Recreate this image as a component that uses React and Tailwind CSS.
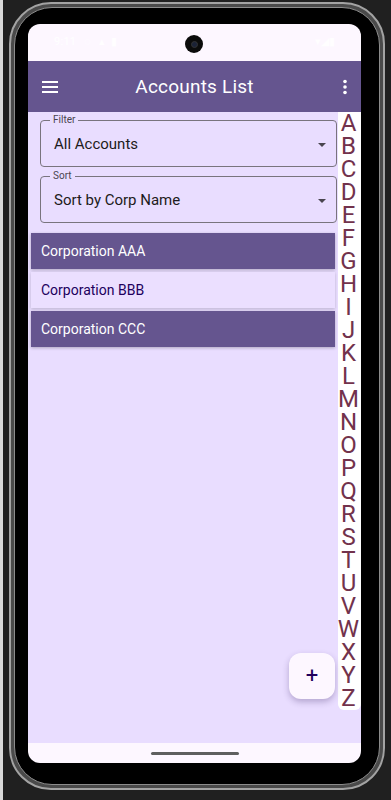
import React from 'react';

const letters = 'ABCDEFGHIJKLMNOPQRSTUVWXYZ'.split('');

const accounts = [
    { name: 'Corporation AAA', dark: true },
    { name: 'Corporation BBB', dark: false },
    { name: 'Corporation CCC', dark: true },
];

const Caret = () => (
    <svg width="8" height="4" viewBox="0 0 8 4" className="shrink-0">
        <path d="M0 0 L8 0 L4 4 Z" fill="#49454f" />
    </svg>
);

const OutlinedSelect = ({ label, value }) => (
    <div className="relative h-[47px] rounded-[4px] border border-[#79747e] flex items-center pl-[13px] pr-[10px] pt-[2px]">
        <span className="absolute -top-[7px] left-[9px] px-[3px] bg-[#e9ddff] text-[10px] leading-[12px] text-[#49454f]">{label}</span>
        <span className="flex-1 text-[15px] text-[#1d1b20]">{value}</span>
        <Caret />
    </div>
);

const App = () => {
    return (
        <div className="w-[391px] h-[800px] bg-[#202020] pl-[6px] pt-[2px] border-l-[3px] border-[#d9d9d9] overflow-hidden" style={{ fontFamily: 'Roboto, "Noto Sans", sans-serif' }}>
            <div className="w-[376px] h-[788px] rounded-[42px] border-[2px] border-[#a3a3a3] bg-[#4a4a4a] p-[3px]">
                <div className="w-full h-full rounded-[38px] border border-[#8c8c8c] bg-black pl-[13px] pt-[16px]">
                    {/* screen */}
                    <div className="w-[333px] h-[739px] rounded-[12px] overflow-hidden bg-[#fdf7ff] flex flex-col">
                        {/* status bar */}
                        <div className="h-[37px] flex items-center px-[26px] text-white text-[11px] relative">
                            <span className="tracking-wide">9:11</span>
                            <span className="ml-[8px] opacity-80">◌</span>
                            <span className="ml-[8px] opacity-80">▴</span>
                            <span className="ml-[6px] opacity-80">▮</span>
                            <div className="flex-1" />
                            <span className="opacity-80">▾◢▮</span>
                            <div className="absolute left-[157px] top-[11px] w-[18px] h-[18px] rounded-full bg-[#0b0b0b] flex items-center justify-center">
                                <div className="w-[7px] h-[7px] rounded-full bg-[#1b2236] border border-[#333]" />
                            </div>
                        </div>
                        {/* app bar */}
                        <div className="h-[51px] bg-[#65558f] flex items-center px-[14px] text-white">
                            <div className="w-[40px] flex items-center">
                                <svg width="16" height="12" viewBox="0 0 16 12">
                                    <rect x="0" y="0" width="16" height="2" fill="white" />
                                    <rect x="0" y="5" width="16" height="2" fill="white" />
                                    <rect x="0" y="10" width="16" height="2" fill="white" />
                                </svg>
                            </div>
                            <div className="flex-1 text-center text-[19px] tracking-[0.2px] pt-[2px]">Accounts List</div>
                            <div className="w-[40px] flex items-center justify-end">
                                <svg width="8" height="16" viewBox="0 0 8 16" className="mr-[-2px]">
                                    <circle cx="4" cy="2.5" r="1.8" fill="white" />
                                    <circle cx="4" cy="8" r="1.8" fill="white" />
                                    <circle cx="4" cy="13.5" r="1.8" fill="white" />
                                </svg>
                            </div>
                        </div>
                        {/* content */}
                        <div className="flex-1 bg-[#e9ddff] relative">
                            <div className="pt-[8px] pl-[12px] pr-[24px] flex flex-col gap-[9px]">
                                <OutlinedSelect label="Filter" value="All Accounts" />
                                <OutlinedSelect label="Sort" value="Sort by Corp Name" />
                            </div>
                            <div className="mt-[10px] pl-[3px] pr-[26px] flex flex-col gap-[3px]">
                                {accounts.map((a) => (
                                    <div
                                        key={a.name}
                                        className={
                                            a.dark
                                                ? 'h-[36px] bg-[#65558f] text-white text-[14px] flex items-center pl-[10px] shadow-[0_1px_3px_rgba(0,0,0,0.25)]'
                                                : 'h-[36px] bg-[#ebdfff] text-[#21005d] text-[14px] flex items-center pl-[10px] shadow-[0_1px_3px_rgba(0,0,0,0.2)]'
                                        }
                                    >
                                        {a.name}
                                    </div>
                                ))}
                            </div>
                            {/* alphabet index */}
                            <div className="absolute right-0 top-0 w-[23px] bg-white rounded-b-[6px] flex flex-col items-center">
                                {letters.map((l) => (
                                    <div key={l} className="h-[23px] leading-[23px] text-[24px] text-[#72324c] pr-[2px]">
                                        {l}
                                    </div>
                                ))}
                            </div>
                            {/* FAB */}
                            <button className="absolute right-[26px] bottom-[44px] w-[46px] h-[46px] rounded-[12px] bg-[#fdf7ff] text-[#21005d] text-[22px] leading-none flex items-center justify-center shadow-[0_3px_6px_rgba(60,40,100,0.3)]">
                                +
                            </button>
                        </div>
                        {/* nav bar */}
                        <div className="h-[20px] flex items-center justify-center">
                            <div className="w-[88px] h-[3px] rounded-full bg-[#5f5f5f]" />
                        </div>
                    </div>
                </div>
            </div>
        </div>
    );
};

export default App;
